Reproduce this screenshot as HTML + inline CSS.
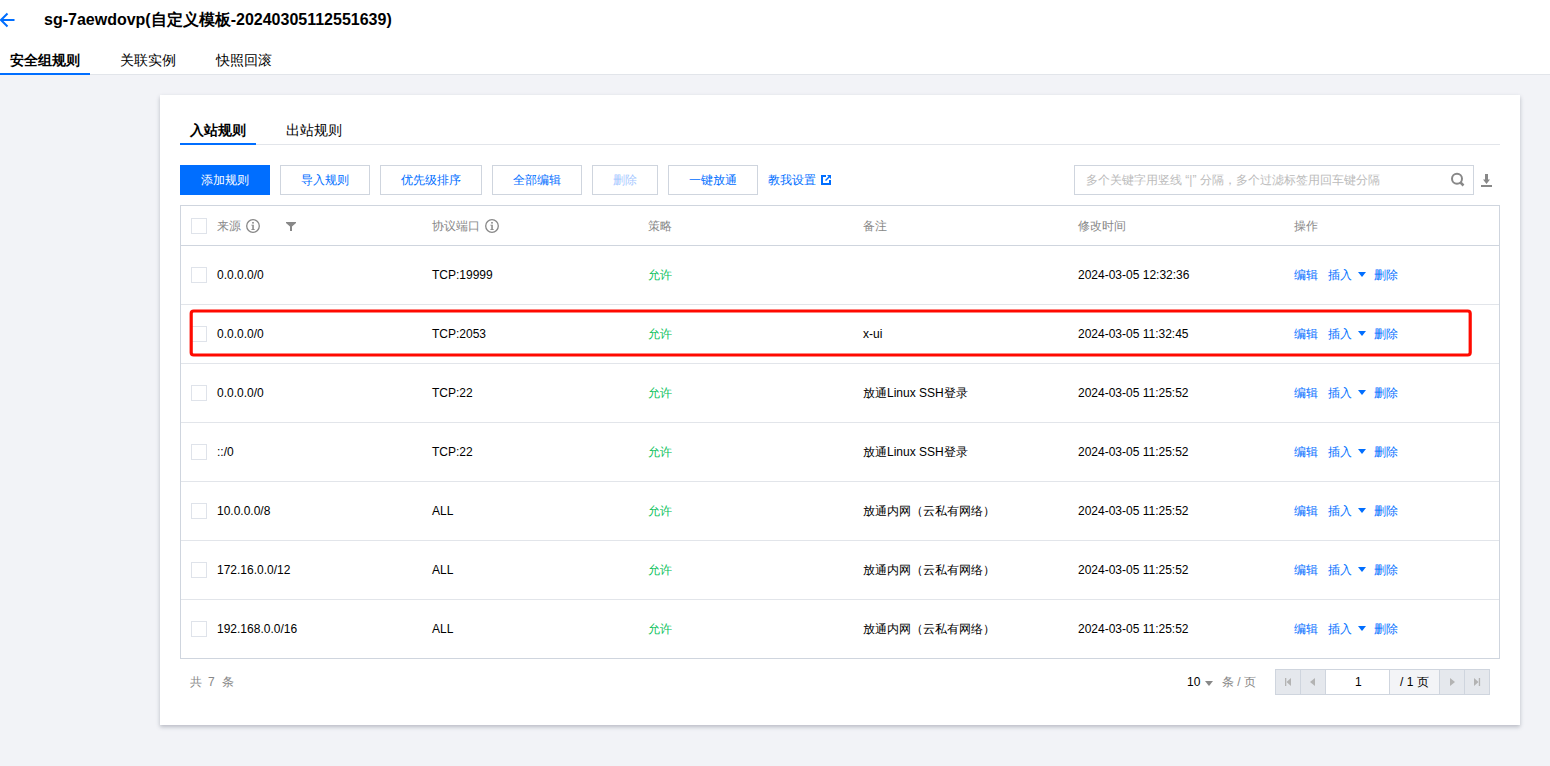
<!DOCTYPE html>
<html><head><meta charset="utf-8">
<style>
*{margin:0;padding:0;box-sizing:border-box}
html,body{width:1550px;height:766px;overflow:hidden}
body{background:#f2f3f7;font-family:"Liberation Sans",sans-serif;font-size:12px;color:#000;position:relative}
.abs{position:absolute;white-space:nowrap}
#top{position:absolute;left:0;top:0;width:1550px;height:75px;background:#fff;border-bottom:1px solid #e2e5ea}
.title{left:44px;top:10px;font-size:16px;font-weight:bold;line-height:20px;color:#000}
.tab{top:52px;font-size:14px;line-height:16px;color:#000}
.tab.on{font-weight:bold}
#card{position:absolute;left:160px;top:95px;width:1360px;height:630px;background:#fff;box-shadow:0 2px 4px rgba(54,58,80,0.3)}
.itab{top:122px;font-size:14px;line-height:16px}
.btn{position:absolute;top:165px;height:30px;border:1px solid #cfd5de;background:#fff;color:#006eff;font-size:12px;line-height:28px;text-align:center}
.btn.primary{background:#006eff;border-color:#006eff;color:#fff}
.btn.dis{color:#a6c8ff}
#search{position:absolute;left:1074px;top:165px;width:400px;height:30px;border:1px solid #cfd5de;background:#fff}
.ph{position:absolute;left:11px;top:7px;font-size:12px;line-height:14px;color:#bbb;white-space:nowrap}
#table{position:absolute;left:180px;top:205px;width:1320px;height:454px;border:1px solid #cfd5de;background:#fff}
.hl{position:absolute;left:181px;width:1318px;height:1px;background:#e2e5ea}
.hh{position:absolute;left:181px;top:245px;width:1318px;height:1px;background:#cfd5de}
.cb{position:absolute;left:191px;width:16px;height:16px;border:1px solid #dfe3ea;background:#fff}
.cell{position:absolute;font-size:12px;line-height:14px;white-space:nowrap;color:#000}
.hd{color:#888}
.green{color:#0abf5b}
.link{color:#006eff}
.tri{position:absolute;width:0;height:0;border-left:4px solid transparent;border-right:4px solid transparent;border-top:5px solid #006eff}
.pg{position:absolute;top:669px;height:26px;border:1px solid #cfd5de;background:#e5e8ed}
</style></head><body>
<div id="top">
  <svg class="abs" style="left:0;top:12px" width="15" height="16" viewBox="0 0 15 16"><path d="M7.5 1.5 L1 8 L7.5 14.5 M1 8 H14.5" fill="none" stroke="#006eff" stroke-width="2"/></svg>
  <div class="abs title">sg-7aewdovp(自定义模板-20240305112551639)</div>
  <div class="abs tab on" style="left:10px">安全组规则</div>
  <div class="abs tab" style="left:120px">关联实例</div>
  <div class="abs tab" style="left:216px">快照回滚</div>
  <div class="abs" style="left:0;top:73px;width:90px;height:2px;background:#006eff"></div>
</div>
<div id="card"></div>
<div class="abs itab" style="left:190px;font-weight:bold">入站规则</div>
<div class="abs itab" style="left:286px">出站规则</div>
<div class="abs" style="left:180px;top:144px;width:1320px;height:1px;background:#e2e5ea"></div>
<div class="abs" style="left:180px;top:143px;width:76px;height:2px;background:#006eff"></div>

<div class="btn primary" style="left:180px;width:90px">添加规则</div>
<div class="btn" style="left:280px;width:90px">导入规则</div>
<div class="btn" style="left:380px;width:102px">优先级排序</div>
<div class="btn" style="left:492px;width:90px">全部编辑</div>
<div class="btn dis" style="left:592px;width:66px">删除</div>
<div class="btn" style="left:668px;width:90px">一键放通</div>
<div class="abs link" style="left:768px;top:173px;font-size:12px;line-height:14px">教我设置</div>
<svg class="abs" style="left:820px;top:174px" width="12" height="12" viewBox="0 0 12 12"><path d="M1 1H6V3H3V9H9V6H11V11H1Z M7 1H11V5L9.5 3.5 6 7 5 6 8.5 2.5Z" fill="#006eff"/></svg>

<div id="search"><div class="ph">多个关键字用竖线 “|” 分隔，多个过滤标签用回车键分隔</div></div>
<svg class="abs" style="left:1450px;top:172px" width="16" height="16" viewBox="0 0 16 16"><circle cx="7" cy="6.7" r="5" fill="none" stroke="#888" stroke-width="2"/><path d="M10.5 10.5 L13.5 13.5" stroke="#888" stroke-width="2.5"/></svg>
<svg class="abs" style="left:1481px;top:174px" width="11" height="13" viewBox="0 0 11 13"><path d="M4 0H7V5.5H9L5.5 10 2 5.5H4Z" fill="#888"/><rect x="0" y="11" width="11" height="2" fill="#888"/></svg>

<div id="table"></div>
<div class="hh"></div>
<div class="cb" style="top:218px"></div>
<div class="cell hd" style="left:217px;top:219px">来源</div>
<svg class="abs" style="left:246px;top:219px" width="14" height="14" viewBox="0 0 14 14"><circle cx="7" cy="7" r="6.3" fill="none" stroke="#888" stroke-width="1.3"/><rect x="6.2" y="3" width="1.6" height="1.6" fill="#888"/><path d="M5.3 5.8H7.8V10.2H8.8V11H5.3V10.2H6.3V6.6H5.3Z" fill="#888"/></svg>
<svg class="abs" style="left:286px;top:222px" width="10" height="9" viewBox="0 0 10 9"><path d="M0 0H10V1L6 4.5V9H4V4.5L0 1Z" fill="#888"/></svg>
<div class="cell hd" style="left:432px;top:219px">协议端口</div>
<svg class="abs" style="left:485px;top:219px" width="14" height="14" viewBox="0 0 14 14"><circle cx="7" cy="7" r="6.3" fill="none" stroke="#888" stroke-width="1.3"/><rect x="6.2" y="3" width="1.6" height="1.6" fill="#888"/><path d="M5.3 5.8H7.8V10.2H8.8V11H5.3V10.2H6.3V6.6H5.3Z" fill="#888"/></svg>
<div class="cell hd" style="left:648px;top:219px">策略</div>
<div class="cell hd" style="left:863px;top:219px">备注</div>
<div class="cell hd" style="left:1078px;top:219px">修改时间</div>
<div class="cell hd" style="left:1294px;top:219px">操作</div>
<div class="cb" style="top:267px"></div>
<div class="cell" style="left:217px;top:268px">0.0.0.0/0</div>
<div class="cell" style="left:432px;top:268px">TCP:19999</div>
<div class="cell green" style="left:648px;top:268px">允许</div>
<div class="cell" style="left:863px;top:268px"></div>
<div class="cell" style="left:1078px;top:268px">2024-03-05 12:32:36</div>
<div class="cell link" style="left:1294px;top:268px">编辑</div>
<div class="cell link" style="left:1328px;top:268px">插入</div>
<div class="tri" style="left:1358px;top:272px"></div>
<div class="cell link" style="left:1374px;top:268px">删除</div>
<div class="hl" style="top:304px"></div><div class="cb" style="top:326px"></div>
<div class="cell" style="left:217px;top:327px">0.0.0.0/0</div>
<div class="cell" style="left:432px;top:327px">TCP:2053</div>
<div class="cell green" style="left:648px;top:327px">允许</div>
<div class="cell" style="left:863px;top:327px">x-ui</div>
<div class="cell" style="left:1078px;top:327px">2024-03-05 11:32:45</div>
<div class="cell link" style="left:1294px;top:327px">编辑</div>
<div class="cell link" style="left:1328px;top:327px">插入</div>
<div class="tri" style="left:1358px;top:331px"></div>
<div class="cell link" style="left:1374px;top:327px">删除</div>
<div class="hl" style="top:363px"></div><div class="cb" style="top:385px"></div>
<div class="cell" style="left:217px;top:386px">0.0.0.0/0</div>
<div class="cell" style="left:432px;top:386px">TCP:22</div>
<div class="cell green" style="left:648px;top:386px">允许</div>
<div class="cell" style="left:863px;top:386px">放通Linux SSH登录</div>
<div class="cell" style="left:1078px;top:386px">2024-03-05 11:25:52</div>
<div class="cell link" style="left:1294px;top:386px">编辑</div>
<div class="cell link" style="left:1328px;top:386px">插入</div>
<div class="tri" style="left:1358px;top:390px"></div>
<div class="cell link" style="left:1374px;top:386px">删除</div>
<div class="hl" style="top:422px"></div><div class="cb" style="top:444px"></div>
<div class="cell" style="left:217px;top:445px">::/0</div>
<div class="cell" style="left:432px;top:445px">TCP:22</div>
<div class="cell green" style="left:648px;top:445px">允许</div>
<div class="cell" style="left:863px;top:445px">放通Linux SSH登录</div>
<div class="cell" style="left:1078px;top:445px">2024-03-05 11:25:52</div>
<div class="cell link" style="left:1294px;top:445px">编辑</div>
<div class="cell link" style="left:1328px;top:445px">插入</div>
<div class="tri" style="left:1358px;top:449px"></div>
<div class="cell link" style="left:1374px;top:445px">删除</div>
<div class="hl" style="top:481px"></div><div class="cb" style="top:503px"></div>
<div class="cell" style="left:217px;top:504px">10.0.0.0/8</div>
<div class="cell" style="left:432px;top:504px">ALL</div>
<div class="cell green" style="left:648px;top:504px">允许</div>
<div class="cell" style="left:863px;top:504px">放通内网（云私有网络）</div>
<div class="cell" style="left:1078px;top:504px">2024-03-05 11:25:52</div>
<div class="cell link" style="left:1294px;top:504px">编辑</div>
<div class="cell link" style="left:1328px;top:504px">插入</div>
<div class="tri" style="left:1358px;top:508px"></div>
<div class="cell link" style="left:1374px;top:504px">删除</div>
<div class="hl" style="top:540px"></div><div class="cb" style="top:562px"></div>
<div class="cell" style="left:217px;top:563px">172.16.0.0/12</div>
<div class="cell" style="left:432px;top:563px">ALL</div>
<div class="cell green" style="left:648px;top:563px">允许</div>
<div class="cell" style="left:863px;top:563px">放通内网（云私有网络）</div>
<div class="cell" style="left:1078px;top:563px">2024-03-05 11:25:52</div>
<div class="cell link" style="left:1294px;top:563px">编辑</div>
<div class="cell link" style="left:1328px;top:563px">插入</div>
<div class="tri" style="left:1358px;top:567px"></div>
<div class="cell link" style="left:1374px;top:563px">删除</div>
<div class="hl" style="top:599px"></div><div class="cb" style="top:621px"></div>
<div class="cell" style="left:217px;top:622px">192.168.0.0/16</div>
<div class="cell" style="left:432px;top:622px">ALL</div>
<div class="cell green" style="left:648px;top:622px">允许</div>
<div class="cell" style="left:863px;top:622px">放通内网（云私有网络）</div>
<div class="cell" style="left:1078px;top:622px">2024-03-05 11:25:52</div>
<div class="cell link" style="left:1294px;top:622px">编辑</div>
<div class="cell link" style="left:1328px;top:622px">插入</div>
<div class="tri" style="left:1358px;top:626px"></div>
<div class="cell link" style="left:1374px;top:622px">删除</div>
<svg class="abs" style="left:0;top:0" width="1550" height="766"><rect x="191.2" y="311" width="1279" height="44" rx="2.5" ry="2.5" fill="none" stroke="#ff0a00" stroke-width="3.2"/></svg>

<div class="cell" style="left:190px;top:675px;color:#888">共</div><div class="cell" style="left:208px;top:675px;color:#888">7</div><div class="cell" style="left:222px;top:675px;color:#888">条</div>
<div class="cell" style="left:1187px;top:675px;color:#000">10</div>
<div class="tri" style="left:1205px;top:681px;border-top-color:#888"></div>
<div class="cell" style="left:1222px;top:675px;color:#888">条 / 页</div>
<div class="pg" style="left:1275px;width:26px"></div>
<div class="pg" style="left:1300px;width:26px"></div>
<div class="pg" style="left:1325px;width:65px;background:#fff"></div>
<div class="pg" style="left:1389px;width:51px;background:#f3f4f7"></div>
<div class="pg" style="left:1439px;width:26px"></div>
<div class="pg" style="left:1464px;width:26px"></div>
<div class="cell" style="left:1355px;top:675px">1</div>
<div class="cell" style="left:1400px;top:675px">/ 1 页</div>

<svg class="abs" style="left:1284px;top:678px" width="8" height="8" viewBox="0 0 8 8"><rect x="1" y="0" width="1.3" height="8" fill="#b3b3b3"/><path d="M2.5 4L7 0V8Z" fill="#b3b3b3"/></svg>
<svg class="abs" style="left:1309px;top:678px" width="8" height="8" viewBox="0 0 8 8"><path d="M1 4L6 0V8Z" fill="#b3b3b3"/></svg>
<svg class="abs" style="left:1449px;top:678px" width="8" height="8" viewBox="0 0 8 8"><path d="M1 0L6 4 1 8Z" fill="#b3b3b3"/></svg>
<svg class="abs" style="left:1473px;top:678px" width="8" height="8" viewBox="0 0 8 8"><path d="M1 0L5.5 4 1 8Z" fill="#b3b3b3"/><rect x="5.8" y="0" width="1.3" height="8" fill="#b3b3b3"/></svg>
</body></html>
